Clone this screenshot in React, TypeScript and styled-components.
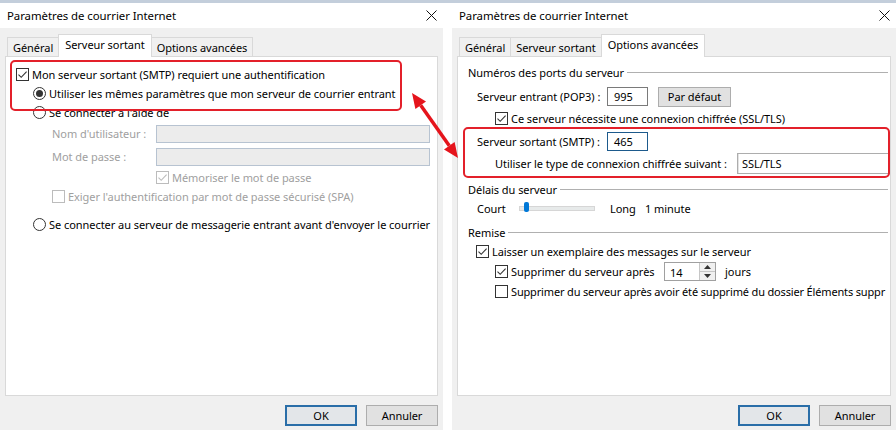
import React from 'react'
import styled, { createGlobalStyle, css } from 'styled-components'

const GlobalStyle = createGlobalStyle`
	html, body {
		margin: 0;
		padding: 0;
		background: #fff;
	}
	body {
		font-family: "Segoe UI", "Noto Sans", "Open Sans", sans-serif;
		font-size: 11px;
		letter-spacing: -0.05px;
		color: #000;
	}
`

const Page = styled.div`
	position: relative;
	display: flex;
	gap: 9px;
	width: 896px;
	height: 430px;
	box-sizing: border-box;
	overflow: hidden;
	border-top: 3px solid #c3cedb;
	background: #fff;
`

const Dialog = styled.div<{ $width: number }>`
	width: ${(p) => p.$width}px;
	flex: none;
	display: flex;
	flex-direction: column;
`

const TitleBar = styled.div`
	height: 25px;
	flex: none;
	display: flex;
	align-items: center;
	justify-content: space-between;
	padding: 0 6px 0 7px;
	font-size: 11.4px;
	background: #fff;
`

const Body = styled.div`
	flex: 1;
	display: flex;
	flex-direction: column;
	padding: 6px 5px 0;
	background: #f0f0f0;
`

const TabStrip = styled.div`
	position: relative;
	z-index: 1;
	display: flex;
	align-items: flex-end;
	height: 23px;
	margin-bottom: -1px;
	padding-left: 3px;
`

const Tab = styled.div<{ $active?: boolean }>`
	box-sizing: border-box;
	display: flex;
	align-items: center;
	margin-left: -1px;
	border: 1px solid #d9d9d9;
	${({ $active }) =>
		$active
			? css`
					height: 23px;
					padding: 0 6px 3px;
					border-bottom: none;
					background: #fff;
			  `
			: css`
					height: 20px;
					padding: 0 5px;
					background: #f0f0f0;
			  `}
`

const Panel = styled.div`
	height: 340px;
	box-sizing: border-box;
	display: flex;
	flex-direction: column;
	overflow: hidden;
	border: 1px solid #d9d9d9;
	background: #fff;
`

const Footer = styled.div`
	display: flex;
	justify-content: flex-end;
	gap: 9px;
	padding-top: 9px;
`

const Button = styled.button<{ $primary?: boolean; $width?: number; $height?: number }>`
	width: ${(p) => p.$width || 72}px;
	height: ${(p) => p.$height || 21}px;
	box-sizing: border-box;
	padding: 0;
	font: inherit;
	letter-spacing: inherit;
	color: #000;
	background: #e1e1e1;
	border: 1px solid #adadad;
	${({ $primary }) =>
		$primary &&
		css`
			border: 2px solid #2a6ea8;
			background: #e3e6e9;
		`}
`

const Row = styled.div<{ $indent: number; $h: number; $mt?: number; $mr?: number }>`
	display: flex;
	align-items: center;
	flex: none;
	height: ${(p) => p.$h}px;
	margin-left: ${(p) => p.$indent}px;
	margin-top: ${(p) => p.$mt || 0}px;
	margin-right: ${(p) => p.$mr || 0}px;
	white-space: nowrap;
`

const Text = styled.span<{ $disabled?: boolean; $gap?: number; $width?: number; $tight?: boolean }>`
	flex: none;
	margin-left: ${(p) => (p.$gap === undefined ? 3 : p.$gap)}px;
	color: ${(p) => (p.$disabled ? '#a0a0a0' : '#000')};
	${(p) => p.$width && `width: ${p.$width}px;`}
	${(p) => p.$tight && 'letter-spacing: -0.16px;'}
`

const Box = styled.span<{ $disabled?: boolean }>`
	width: 13px;
	height: 13px;
	box-sizing: border-box;
	flex: none;
	display: inline-flex;
	align-items: center;
	justify-content: center;
	border: 1px solid ${(p) => (p.$disabled ? '#bcbcbc' : '#333')};
	background: #fff;
`

const Circle = styled.span`
	width: 13px;
	height: 13px;
	box-sizing: border-box;
	flex: none;
	display: inline-flex;
	align-items: center;
	justify-content: center;
	border: 1px solid #333;
	border-radius: 50%;
	background: #fff;
`

const Dot = styled.span`
	width: 7px;
	height: 7px;
	border-radius: 50%;
	background: #333;
`

const TextBox = styled.div<{ $width?: number; $height?: number; $state?: 'disabled' | 'focus' }>`
	box-sizing: border-box;
	display: flex;
	align-items: center;
	padding-left: 6px;
	height: ${(p) => p.$height || 19}px;
	${(p) => (p.$width ? `width: ${p.$width}px; flex: none;` : 'flex: 1;')}
	border: 1px solid #7a7a7a;
	background: #fff;
	${({ $state }) =>
		$state === 'disabled' &&
		css`
			border-color: #b7c3d1;
			background: #ececec;
		`}
	${({ $state }) =>
		$state === 'focus' &&
		css`
			border-color: #1d5a8c;
		`}
`

const Combo = styled.div`
	flex: 1;
	height: 21px;
	box-sizing: border-box;
	display: flex;
	align-items: center;
	padding-left: 4px;
	border: 1px solid #adadad;
	border-right: none;
	box-shadow: inset 1px 0 0 #e3e3e3;
	background: #fff;
`

const Group = styled.div<{ $mt: number }>`
	display: flex;
	align-items: center;
	gap: 3px;
	height: 17px;
	flex: none;
	margin: ${(p) => p.$mt}px 2px 0 10px;
	white-space: nowrap;

	&::after {
		content: '';
		flex: 1;
		height: 1px;
		background: #b0b0b0;
	}
`

const Track = styled.div`
	position: relative;
	width: 74px;
	height: 3px;
	flex: none;
	border: 1px solid #d6d6d6;
	background: #e7eaea;
`

const Thumb = styled.div`
	position: absolute;
	left: 4px;
	top: -5px;
	width: 5px;
	height: 10px;
	border-radius: 2px;
	background: #0078d7;
`

const Spin = styled.div`
	display: flex;
	width: 52px;
	height: 19px;
	box-sizing: border-box;
	flex: none;
	border: 1px solid #a0a0a0;
	background: #fff;
`

const SpinValue = styled.div`
	flex: 1;
	display: flex;
	align-items: center;
	padding: 2px 0 0 5px;
`

const SpinButtons = styled.div`
	width: 15px;
	display: flex;
	flex-direction: column;
	border-left: 1px solid #c6c6c6;
`

const SpinButton = styled.div`
	flex: 1;
	display: flex;
	align-items: center;
	justify-content: center;
	background: #f0f0f0;

	& + & {
		border-top: 1px solid #c6c6c6;
	}
`

const Highlight = styled.div<{ $x: number; $y: number; $w: number; $h: number }>`
	position: absolute;
	left: ${(p) => p.$x}px;
	top: ${(p) => p.$y}px;
	width: ${(p) => p.$w}px;
	height: ${(p) => p.$h}px;
	box-sizing: border-box;
	border: 2px solid #e3202a;
	border-radius: 5px;
	pointer-events: none;
`

const ArrowLayer = styled.svg`
	position: absolute;
	left: 400px;
	top: 77px;
	pointer-events: none;
`

function Check({ checked, disabled }: { checked?: boolean; disabled?: boolean }) {
	const color = disabled ? '#bcbcbc' : '#333'
	return (
		<Box $disabled={disabled}>
			{checked && (
				<svg width="11" height="11" viewBox="0 0 11 11">
					<path d="M1.5 5.6 L4.2 8.3 L9.6 2.6" fill="none" stroke={color} strokeWidth="1.1" />
				</svg>
			)}
		</Box>
	)
}

function Radio({ checked }: { checked?: boolean }) {
	return <Circle>{checked && <Dot />}</Circle>
}

function CloseIcon() {
	return (
		<svg width="11" height="11" viewBox="0 0 11 11">
			<path d="M0.5 0.5 L10.5 10.5 M10.5 0.5 L0.5 10.5" stroke="#111" strokeWidth="1" />
		</svg>
	)
}

function Window({ width, active, children }: { width: number; active: number; children: React.ReactNode }) {
	const tabs = ['Général', 'Serveur sortant', 'Options avancées']
	return (
		<Dialog $width={width}>
			<TitleBar>
				<span>Paramètres de courrier Internet</span>
				<CloseIcon />
			</TitleBar>
			<Body>
				<TabStrip>
					{tabs.map((t, i) => (
						<Tab key={t} $active={i === active}>
							{t}
						</Tab>
					))}
				</TabStrip>
				<Panel>{children}</Panel>
				<Footer>
					<Button $primary>OK</Button>
					<Button>Annuler</Button>
				</Footer>
			</Body>
		</Dialog>
	)
}

function OutgoingServerTab() {
	return (
		<>
			<Row $indent={10} $h={19} $mt={8}>
				<Check checked />
				<Text>Mon serveur sortant (SMTP) requiert une authentification</Text>
			</Row>
			<Row $indent={27} $h={19}>
				<Radio checked />
				<Text>Utiliser les mêmes paramètres que mon serveur de courrier entrant</Text>
			</Row>
			<Row $indent={27} $h={19}>
				<Radio />
				<Text>Se connecter à l'aide de</Text>
			</Row>
			<Row $indent={46} $h={23} $mr={7}>
				<Text $disabled $gap={0} $width={104}>
					Nom d'utilisateur :
				</Text>
				<TextBox $state="disabled" $height={18} />
			</Row>
			<Row $indent={46} $h={23} $mr={7}>
				<Text $disabled $gap={0} $width={104}>
					Mot de passe :
				</Text>
				<TextBox $state="disabled" $height={18} />
			</Row>
			<Row $indent={150} $h={19}>
				<Check checked disabled />
				<Text $disabled>Mémoriser le mot de passe</Text>
			</Row>
			<Row $indent={46} $h={19}>
				<Check disabled />
				<Text $disabled>Exiger l'authentification par mot de passe sécurisé (SPA)</Text>
			</Row>
			<Row $indent={27} $h={19} $mt={9}>
				<Radio />
				<Text>Se connecter au serveur de messagerie entrant avant d'envoyer le courrier</Text>
			</Row>
		</>
	)
}

function AdvancedTab() {
	return (
		<>
			<Group $mt={7}>Numéros des ports du serveur</Group>
			<Row $indent={19} $h={21} $mt={5}>
				<Text $gap={0} $width={130}>
					Serveur entrant (POP3) :
				</Text>
				<TextBox $width={41}>995</TextBox>
				<Button $width={73} $height={20} style={{ marginLeft: 10 }}>
					Par défaut
				</Button>
			</Row>
			<Row $indent={37} $h={19} $mt={2}>
				<Check checked />
				<Text>Ce serveur nécessite une connexion chiffrée (SSL/TLS)</Text>
			</Row>
			<Row $indent={19} $h={22} $mt={2}>
				<Text $gap={0} $width={130}>
					Serveur sortant (SMTP) :
				</Text>
				<TextBox $width={41} $state="focus">
					465
				</TextBox>
			</Row>
			<Row $indent={37} $h={22}>
				<Text $gap={0} $width={242}>
					Utiliser le type de connexion chiffrée suivant :
				</Text>
				<Combo>SSL/TLS</Combo>
			</Row>
			<Group $mt={7}>Délais du serveur</Group>
			<Row $indent={19} $h={19} $mt={1}>
				<Text $gap={0} $width={42}>
					Court
				</Text>
				<Track>
					<Thumb />
				</Track>
				<Text $gap={15} $width={35}>
					Long
				</Text>
				<Text $gap={0}>1 minute</Text>
			</Row>
			<Group $mt={6}>Remise</Group>
			<Row $indent={18} $h={19} $mt={1}>
				<Check checked />
				<Text>Laisser un exemplaire des messages sur le serveur</Text>
			</Row>
			<Row $indent={37} $h={21}>
				<Check checked />
				<Text $width={153}>Supprimer du serveur après</Text>
				<Spin>
					<SpinValue>14</SpinValue>
					<SpinButtons>
						<SpinButton>
							<svg width="7" height="4" viewBox="0 0 7 4">
								<path d="M0 4 L3.5 0 L7 4 Z" fill="#333" />
							</svg>
						</SpinButton>
						<SpinButton>
							<svg width="7" height="4" viewBox="0 0 7 4">
								<path d="M0 0 L3.5 4 L7 0 Z" fill="#333" />
							</svg>
						</SpinButton>
					</SpinButtons>
				</Spin>
				<Text $gap={9}>jours</Text>
			</Row>
			<Row $indent={37} $h={19}>
				<Check />
				<Text $tight>Supprimer du serveur après avoir été supprimé du dossier Éléments suppr</Text>
			</Row>
		</>
	)
}

export default function App() {
	return (
		<>
			<GlobalStyle />
			<Page>
				<Window width={443} active={1}>
					<OutgoingServerTab />
				</Window>
				<Window width={444} active={2}>
					<AdvancedTab />
				</Window>
				<Highlight $x={10} $y={57} $w={392} $h={51} />
				<Highlight $x={463} $y={124} $w={427} $h={51} />
				<ArrowLayer width="70" height="90" viewBox="0 0 70 90">
					<line x1="20.7" y1="25.3" x2="49.3" y2="65.7" stroke="#e5141c" strokeWidth="3.5" />
					<polygon points="12,13 15.4,29 26,21.5" fill="#e5141c" />
					<polygon points="58,78 44,69.5 54.6,62" fill="#e5141c" />
				</ArrowLayer>
			</Page>
		</>
	)
}
